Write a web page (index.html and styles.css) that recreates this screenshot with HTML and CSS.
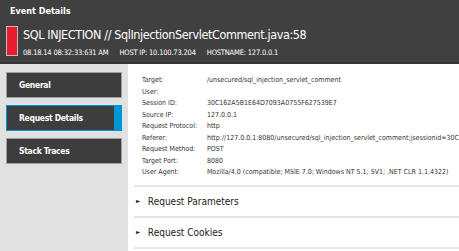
FILE: index.html
```html
<!DOCTYPE html>
<html lang="en">
<head>
    <meta charset="UTF-8">
    <title>Event Details</title>
    <link rel="stylesheet" href="styles.css">
</head>
<body>
    <div class="event">
        <header class="event-header">
            <div class="event-caption">Event Details</div>
            <div class="event-summary">
                <div class="severity"></div>
                <div class="summary-text">
                    <h1 class="event-title">SQL INJECTION // SqlInjectionServletComment.java:58</h1>
                    <div class="event-meta">
                        <span>08.18.14 08:32:33:631 AM</span>
                        <span>HOST IP: 10.100.73.204</span>
                        <span>HOSTNAME: 127.0.0.1</span>
                    </div>
                </div>
            </div>
        </header>

        <div class="event-body">
            <nav class="sidebar">
                <div class="tab">General</div>
                <div class="tab active">Request Details</div>
                <div class="tab">Stack Traces</div>
            </nav>

            <main class="content">
                <table class="details">
                    <tr><td class="key">Target:</td><td>/unsecured/sql_injection_servlet_comment</td></tr>
                    <tr><td class="key">User:</td><td></td></tr>
                    <tr><td class="key">Session ID:</td><td>30C162A5B1E64D7093A0755F627539E7</td></tr>
                    <tr><td class="key">Source IP:</td><td>127.0.0.1</td></tr>
                    <tr><td class="key">Request Protocol:</td><td>http</td></tr>
                    <tr><td class="key">Referer:</td><td>http://127.0.0.1:8080/unsecured/sql_injection_servlet_comment;jsessionid=30C</td></tr>
                    <tr><td class="key">Request Method:</td><td>POST</td></tr>
                    <tr><td class="key">Target Port:</td><td>8080</td></tr>
                    <tr><td class="key">User Agent:</td><td>Mozilla/4.0 (compatible; MSIE 7.0; Windows NT 5.1; SV1; .NET CLR 1.1.4322)</td></tr>
                </table>

                <div class="section"><span class="arrow">&#9658;</span> Request Parameters</div>
                <div class="section"><span class="arrow">&#9658;</span> Request Cookies</div>
            </main>
        </div>
    </div>
</body>
</html>
```

FILE: styles.css
```css
/* Page */
body {
    margin: 0;
    padding: 0;
    background-color: #ffffff;
    font-family: "DejaVu Sans Condensed", "Liberation Sans", sans-serif;
    color: #222;
    overflow: hidden;
}

.event {
    width: 459px;
    height: 251px;
    overflow: hidden;
}

/* Header */
.event-header {
    height: 62px;
    background-color: #404040;
    border-bottom: 2px solid #363636;
    color: white;
}

.event-caption {
    font-size: 9px;
    font-weight: bold;
    padding: 6px 0 0 10px;
    height: 15px;
}

.event-summary {
    display: flex;
    gap: 5px;
    padding-left: 6px;
    padding-top: 5px;
}

.severity {
    width: 10px;
    height: 28px;
    background-color: #e81c2e;
    border: 1px solid #bdbdbd;
    flex-shrink: 0;
}

.event-title {
    margin: 0;
    font-size: 12.5px;
    letter-spacing: -0.4px;
    font-weight: normal;
    line-height: 17px;
    white-space: nowrap;
}

.event-meta {
    margin-top: 5px;
    font-size: 7.5px;
    letter-spacing: -0.2px;
    display: flex;
    gap: 11px;
    white-space: nowrap;
}

/* Body */
.event-body {
    display: flex;
    height: 187px;
}

.sidebar {
    width: 128px;
    background-color: #e1e1e1;
    padding: 8px 0 0 6px;
    box-sizing: border-box;
    display: flex;
    flex-direction: column;
    gap: 7px;
}

.tab {
    width: 116px;
    height: 26px;
    box-sizing: border-box;
    background-color: #3d3d3d;
    border: 1px solid #9e9e9e;
    color: white;
    font-size: 8.5px;
    letter-spacing: -0.3px;
    font-weight: bold;
    line-height: 24px;
    padding-left: 12px;
}

.tab.active {
    border: 1px solid #0096d6;
    border-right: 8px solid #0096d6;
}

/* Content */
.content {
    flex: 1;
    min-width: 0;
    padding-left: 6px;
    overflow: hidden;
}

.details {
    border-collapse: collapse;
    margin: 11px 0 6px 8px;
    font-size: 7px;
    color: #333;
}

.details td {
    padding: 0;
    height: 11.5px;
    line-height: 11.5px;
    white-space: nowrap;
}

.details .key {
    width: 70px;
}

.section {
    border-top: 2px solid #e6e6e6;
    height: 29px;
    line-height: 27px;
    font-size: 10px;
    color: #222;
    padding-left: 2px;
}

.section:last-child {
    border-bottom: 2px solid #e6e6e6;
}

.arrow {
    font-size: 6px;
    display: inline-block;
    width: 9px;
    vertical-align: 2px;
}
```
